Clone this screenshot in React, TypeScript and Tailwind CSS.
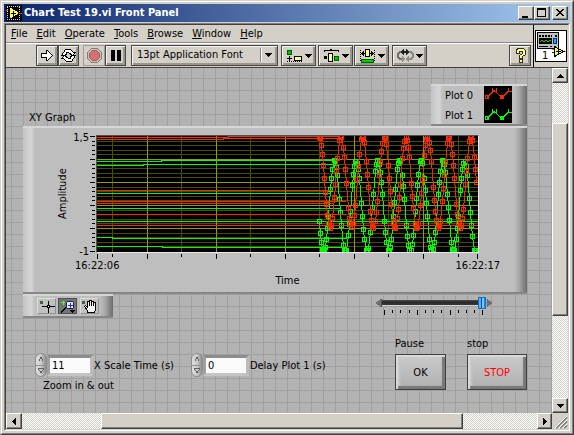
import React, { useState } from 'react';

const MAJOR_X = [50, 119, 188, 257, 326];
const MINOR_X = [15, 84, 153, 222, 291, 361];
const Y_STEPS = Array.from({ length: 26 }, (_, i) => Math.round(i * 4.6));

const RED = '#f62a00';
const GREEN = '#00ff00';

// Flat stretches of the traces: y (or y before / after a step at x) and where they end
const RED_LINES = [
  'M0 1.5H131V.5H242',
  'M0 3.5H126V2.5H242',
  'M0 54.5H236',
  'M0 65.5H249',
  'M0 67.5H236',
  'M0 78.5H250',
  'M0 89.5H381',
];
const GREEN_LINES = [
  'M0 25.5H64V24.5H237',
  'M0 29.5H46V28.5H237',
  'M0 57.5H233',
  'M0 72.5H243',
  'M0 85.5H381',
  'M0 101.5H15V102.5H250',
  'M0 110.5H65V111.5H246',
];

const STEPS = [1, 1, 2, 1, 1, 2, 1];

function wave(centre: number, trough: number) {
  const points: { x: number; y: number }[] = [];
  let x = 222;
  let i = 0;
  while (x <= 380) {
    const y = centre + 46 * Math.cos((2 * Math.PI * (x - trough)) / 21.67);
    points.push({ x, y: Math.min(114, Math.max(1, Math.round(y))) });
    x += i < 8 ? 1 : STEPS[i % STEPS.length];
    i++;
  }
  return points;
}

const PLOTS = [
  { color: GREEN, lines: GREEN_LINES, points: wave(70, 226.3) },
  { color: RED, lines: RED_LINES, points: wave(46, 232.7) },
];

const Plot = () => (
  <svg
    className="block h-[116px] w-full bg-black"
    viewBox="0 0 381 116"
    preserveAspectRatio="none"
    shapeRendering="crispEdges"
    fill="none"
  >
    {Y_STEPS.map((y, i) => (
      i % 5 !== 0 && <path key={y} d={`M0 ${y + 0.5}H381`} stroke="#4d4d00" />
    ))}
    {MINOR_X.map((x) => <path key={x} d={`M${x + 0.5} 0V116`} stroke="#4d4d00" />)}
    {[23, 46, 69, 92].map((y) => <path key={y} d={`M0 ${y + 0.5}H381`} stroke="#999900" />)}
    {MAJOR_X.map((x) => <path key={x} d={`M${x + 0.5} 0V116`} stroke="#999900" />)}
    {PLOTS.map(({ color, lines, points }) => (
      <g key={color} stroke={color}>
        <path d={lines.join('')} />
        <polyline points={points.map((p) => `${p.x + 0.5},${p.y + 0.5}`).join(' ')} />
        {points.map((p) => (
          <rect key={p.x} x={p.x - 1.5} y={p.y - 1.5} width="4" height="4" />
        ))}
      </g>
    ))}
  </svg>
);

const YTicks = () => (
  <svg className="block h-[118px] w-1.5 shrink-0" viewBox="0 0 6 118" shapeRendering="crispEdges" stroke="#000">
    {Y_STEPS.map((y, i) => (
      <path key={y} d={`M${i % 5 === 0 ? 0 : 2} ${y + 1.5}H5`} />
    ))}
  </svg>
);

const XTicks = () => (
  <svg
    className="mt-px block h-[5px] w-full"
    viewBox="0 0 383 5"
    preserveAspectRatio="none"
    shapeRendering="crispEdges"
    stroke="#000"
  >
    {[0, ...MAJOR_X, 380].map((x) => <path key={x} d={`M${x + 1.5} 0V5`} />)}
    {MINOR_X.map((x) => <path key={x} d={`M${x + 1.5} 0V3`} />)}
  </svg>
);

// Raised grey plate used behind the graph, the legend and the palette
const PLATE =
  'border-t-2 border-b-2 border-t-[#d6d6d6] border-b-[#868686] bg-[linear-gradient(90deg,#c4c4c4,#d6d6d6_8px,#bebebe_12px,#bebebe_calc(100%-13px),#a8a8a8_calc(100%-8px),#6c6c6c)]';

const RAISED =
  'bg-[#d4d0c8] border border-t-white border-l-white border-r-[#404040] border-b-[#404040] shadow-[inset_-1px_-1px_0_#808080]';

const TROUGH =
  'bg-[conic-gradient(#fff_25%,#d4d0c8_0_50%,#fff_0_75%,#d4d0c8_0)] bg-[length:2px_2px]';

const TOOL =
  'flex h-[21px] items-center justify-center border border-[#484848] bg-[#d4d0c8] shadow-[inset_1px_1px_0_#f4f2ee,inset_-2px_-2px_0_#9a968e]';

interface IconProps {
  w: number;
  h: number;
  children: React.ReactNode;
}

const Icon = ({ w, h, children }: IconProps) => (
  <svg width={w} height={h} viewBox={`0 0 ${w} ${h}`} shapeRendering="crispEdges" fill="none" className="shrink-0">
    {children}
  </svg>
);

const Down = () => (
  <Icon w={7} h={4}>
    <path d="M0 0h7v1H0zM1 1h5v1H1zM2 2h3v1H2zM3 3h1v1H3z" fill="#000" />
  </Icon>
);

const MenuItem = ({ text }: { text: string }) => (
  <button type="button" className="leading-4">
    <span className="underline underline-offset-1">{text[0]}</span>
    {text.slice(1)}
  </button>
);

const TitleBar = () => (
  <header className="flex h-[18px] items-center bg-[linear-gradient(90deg,#0a246a,#a6caf0)] pl-0.5 pr-0.5">
    <Icon w={16} h={16}>
      <path d="M0 0h16v16H0z" fill="#000" />
      <path d="M1 1.5h14M1 14.5h14" stroke="#d8d8d8" strokeDasharray="1 1" />
      <path d="M1.5 2v12M13.5 2v12" stroke="#d8d8d8" strokeDasharray="1 1" />
      <path d="M4 3v10L12 8z" fill="#ffff50" stroke="#ffff50" />
      <path d="M5 8.5h5M7.5 6v5" stroke="#000" />
      <path d="M0 5.5h2M13 8.5h3" stroke="#f33" />
      <path d="M0 11.5h2" stroke="#00f" />
    </Icon>
    <h1 className="ml-0.5 flex-1 font-bold leading-4 text-white">Chart Test 19.vi Front Panel</h1>
    <div className="flex">
      <button type="button" aria-label="Minimize" className={`${RAISED} h-3.5 w-4`}>
        <Icon w={14} h={12}>
          <path d="M3 9h6v2H3z" fill="#000" />
        </Icon>
      </button>
      <button type="button" aria-label="Maximize" className={`${RAISED} h-3.5 w-4`}>
        <Icon w={14} h={12}>
          <path d="M2 2h9M2 1.5h9M2.5 2v8M10.5 2v8M2 9.5h9" stroke="#000" />
        </Icon>
      </button>
      <button type="button" aria-label="Close" className={`${RAISED} ml-0.5 h-3.5 w-4`}>
        <Icon w={14} h={12}>
          <path
            d="M3 2h2v1H3zM9 2h2v1H9zM4 3h2v1H4zM8 3h2v1H8zM5 4h4v1H5zM6 5h2v1H6zM5 6h4v1H5zM4 7h2v1H4zM8 7h2v1H8zM3 8h2v1H3zM9 8h2v1H9z"
            fill="#000"
          />
        </Icon>
      </button>
    </div>
  </header>
);

const Toolbar = () => (
  <div className="flex h-[23px] pl-[30px] pr-0.5 pt-px">
    <button type="button" aria-label="Run" className={`${TOOL} w-[22px]`}>
      <Icon w={12} h={11}>
        <path d="M.5 3.5h5v-3h1l5 5-5 5h-1v-3h-5z" fill="#fff" stroke="#000" />
      </Icon>
    </button>
    <button type="button" aria-label="Run Continuously" className={`${TOOL} w-[21px]`}>
      <Icon w={15} h={13}>
        <g fill="#fff" stroke="#000">
          <path d="M.5 6.5L4.5 .5H9.5L12.5 3.5H14.5L11.5 6.5L7.5 3.5H6L4.5 6.5z" />
          <path d="M14.5 6.5L10.5 12.5H5.5L2.5 9.5H.5L3.5 6.5L7.5 9.5H9L10.5 6.5z" />
        </g>
      </Icon>
    </button>
    <button
      type="button"
      aria-label="Abort"
      className="ml-1 flex h-[21px] w-[22px] items-center justify-center border border-[#a09c94] bg-[#d4d0c8]"
    >
      <Icon w={15} h={15}>
        <path d="M4.5 .5h6l4 4v6l-4 4h-6l-4-4v-6z" fill="#c8c4bc" stroke="#807c78" />
        <path d="M5.5 2.5h4l3 3v4l-3 3h-4l-3-3v-4z" fill="#d87070" stroke="#a05c58" />
      </Icon>
    </button>
    <button type="button" aria-label="Pause execution" className={`${TOOL} w-[21px]`}>
      <Icon w={10} h={11}>
        <path d="M0 0h4v11H0zM6 0h4v11H6z" fill="#000" />
      </Icon>
    </button>
    <div className="relative ml-[5px] w-[147px]">
      <select
        aria-label="Text settings"
        className="h-[21px] w-full appearance-none border border-[#484848] bg-[#d4d0c8] pl-[5px] pb-0.5 leading-4 shadow-[inset_1px_1px_0_#f4f2ee,inset_-2px_-2px_0_#9a968e]"
      >
        <option>13pt Application Font</option>
      </select>
      <span className="pointer-events-none absolute right-[6px] top-[3px] flex h-[14px] items-center border-l border-[#808080] pl-[4px] shadow-[inset_1px_0_0_#fff]">
        <Down />
      </span>
    </div>
    <button type="button" aria-label="Align Objects" className={`${TOOL} ml-[3px] w-[35px] gap-0.5`}>
      <Icon w={17} h={12}>
        <path d="M1.5 .5h4v4h-4z" fill="#00c000" stroke="#006000" />
        <path d="M3.5 6v5M1 8.5h5" stroke="#000" />
        <path d="M8.5 6.5h7v4h-7z" fill="#ffff80" stroke="#000" />
        <path d="M1 11.5h16" stroke="#000" strokeDasharray="1 1" />
      </Icon>
      <Down />
    </button>
    <button type="button" aria-label="Distribute Objects" className={`${TOOL} ml-0.5 w-[35px] gap-0.5`}>
      <Icon w={17} h={13}>
        <path d="M1 2.5v-1h6v-1h1v1h7v1" stroke="#000" />
        <path d="M1 7h3v3H1z" fill="#000" />
        <path d="M5.5 4.5h4v8h-4z" fill="#ffff80" stroke="#000" />
        <path d="M11.5 7.5h4v4h-4z" fill="#00c000" stroke="#006000" />
      </Icon>
      <Down />
    </button>
    <button type="button" aria-label="Resize Objects" className={`${TOOL} ml-px w-[35px] gap-0.5`}>
      <Icon w={17} h={14}>
        <path d="M1.5 1v12M15.5 1v12" stroke="#000" strokeDasharray="1 1" />
        <path d="M2 4.5h4M11 4.5h4M4.5 2v5M12.5 2v5M3.5 3v3M13.5 3v3" stroke="#000" />
        <path d="M6.5 .5h4v7h-4z" fill="#ffff80" stroke="#000" />
        <path d="M2.5 10.5h12v3h-12z" fill="#00d000" stroke="#006000" />
      </Icon>
      <Down />
    </button>
    <button type="button" aria-label="Reorder" className={`${TOOL} ml-[3px] w-[35px] gap-0.5`}>
      <Icon w={17} h={13}>
        <path d="M6 3H3L1 5v3l2 2h3" stroke="#707070" strokeWidth="2" />
        <path d="M11 3h3l2 2v3l-2 2h-3" stroke="#888888" strokeWidth="2" />
        <path d="M5 7l4 3-4 3zM12 7v6l-4-3z" fill="#909090" />
        <path d="M3 3l4-3v2h2V0l4 3-4 3V4H7v2z" fill="#202020" />
      </Icon>
      <Down />
    </button>
    <button type="button" aria-label="Help" className={`${TOOL} ml-auto w-[22px]`}>
      <Icon w={11} h={15}>
        <path
          d="M2.5 .5h6l2 2v4l-3 2v2h-3v-3l3-2v-2h-3v2h-3v-3zM4.5 11.5h3v3h-3z"
          fill="#ffff90"
          stroke="#303020"
        />
      </Icon>
    </button>
  </div>
);

const ViIcon = () => (
  <div className="flex w-[35px] items-start border-l border-black pl-px pt-[5px]">
    <div className="relative">
      <Icon w={32} h={32}>
        <path d="M.5 .5h31v31H.5z" fill="#fff" stroke="#000" />
        <path d="M2.5 2.5h21v16h-21z" fill="#c0c0c0" stroke="#000" />
        <path d="M4 5.5h13M20 5.5h2" stroke="#000" strokeWidth="2" strokeDasharray="2 1" />
        <path d="M4 8h13v6H4z" fill="#000" />
        <path d="M5 12l2-2 2 2 2-2 2 2 2-2 1 1" stroke="#00e000" />
        <path d="M18.5 8.5h3v5h-3z" fill="#30a0ff" stroke="#003070" />
        <path d="M4 16.5h9M15 16.5h2" stroke="#000" />
        <path d="M17 22.5h3" stroke="#00f" />
        <path d="M17 19.5h3M28 21.5h3" stroke="#f55" />
        <path d="M19.5 16.5v10l9-5z" fill="#ffff20" stroke="#000" />
        <path d="M21 21.5h5M23.5 19v5" stroke="#000" />
      </Icon>
      <span className="absolute bottom-0 left-[7px] leading-3">1</span>
    </div>
  </div>
);

const Legend = () => (
  <div className={`flex h-[42px] w-24 justify-between pl-3.5 pr-[15px] ${PLATE}`}>
    <div className="flex flex-col leading-5">
      <span>Plot 0</span>
      <span>Plot 1</span>
    </div>
    <svg width="28" height="37" viewBox="0 0 28 37" shapeRendering="crispEdges" fill="none" className="bg-black">
      {[RED, GREEN].map((color, i) => (
        <g key={color} stroke={color} transform={`translate(0 ${i * 21})`}>
          <path d="M3 11.5L10 4.5L18 11.5L25 4.5" />
          <path d="M1.5 9.5h3v3h-3zM16.5 9.5h3v3h-3zM8.5 2v3h4v-3M24.5 2v3h3" />
        </g>
      ))}
    </svg>
  </div>
);

const Graph = () => (
  <figure className={`pb-[3px] pl-8 pr-12 pt-[7px] ${PLATE}`}>
    <div className="flex items-start">
      <span className="flex h-[118px] w-4 rotate-180 items-center justify-center leading-4 [writing-mode:vertical-rl]">
        Amplitude
      </span>
      <div className="-mb-[7px] -mt-[5px] flex h-[130px] w-[19px] flex-col items-end justify-between pr-px leading-4">
        <span>1,5</span>
        <span>-1</span>
      </div>
      <YTicks />
      <div className="min-w-0 flex-1">
        <div className="border border-b-[#e8e8e8] border-l-[#505050] border-r-[#e8e8e8] border-t-[#505050]">
          <Plot />
        </div>
        <XTicks />
        <div className="-mx-[21px] flex justify-between leading-[14px]">
          <span>16:22:06</span>
          <span>16:22:17</span>
        </div>
        <div className="text-center leading-4">Time</div>
      </div>
    </div>
  </figure>
);

const PALETTE_BUTTON =
  'flex h-4 w-[19px] items-center justify-center border border-t-[#dedede] border-l-[#dedede] border-r-[#909090] border-b-[#909090] bg-[#c0c0c0]';

const Palette = () => (
  <div className={`flex h-6 w-[90px] gap-0.5 pl-[14px] pt-0.5 ${PLATE}`}>
    <button type="button" aria-label="Cursor movement" className={PALETTE_BUTTON}>
      <Icon w={17} h={14}>
        <path d="M2 2h3v3H2z" fill="#406040" />
        <path d="M4 7.5h13M10.5 2v12" stroke="#000" />
        <path d="M9.5 6.5h2v2h-2z" fill="#fff" stroke="#000" />
      </Icon>
    </button>
    <button
      type="button"
      aria-label="Zoom"
      className="flex h-4 w-[19px] items-center justify-center border border-[#505050] bg-[#747474]"
    >
      <Icon w={17} h={14}>
        <path d="M2 3.5h4M4 1.5v4" stroke="#50ff20" />
        <path d="M2 13.5l5-5" stroke="#000" strokeWidth="2" />
        <circle cx="11" cy="6" r="4" fill="#e8e8ff" stroke="#202060" />
        <path d="M8.5 6h5M11 3.5v5" stroke="#3030a0" />
        <path d="M11 11h5v1h-5zM12 12h3v1h-3zM13 13h1v1h-1z" fill="#000" />
      </Icon>
    </button>
    <button type="button" aria-label="Pan" className={`${PALETTE_BUTTON} ml-px`}>
      <Icon w={17} h={14}>
        <path d="M1 2h3v3H1z" fill="#406040" />
        <path
          d="M6.5 13.5v-2l-3-4 1-1 2 2v-6h2v-1h2v1h2v1h2v7l-1 3z"
          fill="#f4f4f4"
          stroke="#000"
        />
        <path d="M8.5 3v4M10.5 2v5M12.5 3v4" stroke="#000" />
      </Icon>
    </button>
  </div>
);

const WindowSlider = () => (
  <div className="mr-[34px] mt-[3px] w-[118px]">
    <div className="flex items-center">
      <Icon w={7} h={8}>
        <path d="M0 4L6 0V8z" fill="#707070" />
        <path d="M6.5 0v8" stroke="#505050" />
      </Icon>
      <input
        type="range"
        aria-label="Time window"
        min={0}
        max={12}
        defaultValue={12}
        className="h-3 min-w-0 flex-1 appearance-none bg-[linear-gradient(#0000_3px,#505050_3px,#282828_5px,#383838_8px,#d0d0d0_8px,#d0d0d0_9px,#0000_9px)] [&::-webkit-slider-thumb]:h-3 [&::-webkit-slider-thumb]:w-2 [&::-webkit-slider-thumb]:appearance-none [&::-webkit-slider-thumb]:border [&::-webkit-slider-thumb]:border-[#1f6fc0] [&::-webkit-slider-thumb]:bg-[linear-gradient(90deg,#50b0ff_2px,#104a90_2px,#104a90_3px,#70c8ff_3px,#70c8ff_5px,#2880e0_5px)]"
      />
      <Icon w={7} h={8}>
        <path d="M7 4L1 0V8z" fill="#707070" />
        <path d="M.5 0v8" stroke="#a0a0a0" />
      </Icon>
    </div>
    <svg className="mt-px block h-[5px] w-full" viewBox="0 0 118 5" preserveAspectRatio="none" shapeRendering="crispEdges" stroke="#000">
      {Array.from({ length: 13 }, (_, i) => (
        <path key={i} d={`M${Math.round(i * 8.2) + 9.5} 0V${i % 4 === 0 ? 5 : 3}`} />
      ))}
    </svg>
  </div>
);

interface NumericProps {
  id: string;
  label: string;
  initial: number;
}

const Numeric = ({ id, label, initial }: NumericProps) => {
  const [value, setValue] = useState(initial);
  return (
    <div className="flex h-6 items-center">
      <div className="flex h-6 w-3 flex-col overflow-hidden rounded-full border border-[#8c8c8c] bg-[linear-gradient(90deg,#dedede,#cccccc_50%,#8c8c8c)]">
        <button
          type="button"
          aria-label={`Increase ${label}`}
          onClick={() => setValue(value + 1)}
          className="flex flex-1 items-center justify-center border-b border-[#909090]"
        >
          <Icon w={6} h={5}>
            <path d="M.5 4.5L3 .5L5.5 4.5" stroke="#606060" />
          </Icon>
        </button>
        <button
          type="button"
          aria-label={`Decrease ${label}`}
          onClick={() => setValue(value - 1)}
          className="flex flex-1 items-center justify-center"
        >
          <Icon w={6} h={5}>
            <path d="M0 .5h6L3 4.5z" fill="#cccccc" stroke="#606060" />
          </Icon>
        </button>
      </div>
      <input
        id={id}
        type="text"
        value={value}
        onChange={(e) => setValue(Number(e.target.value) || 0)}
        className="h-[21px] w-[46px] border-[3px] border-b-[#c4c4c4] border-l-[#a0a0a0] border-r-[#bcbcbc] border-t-[#8c8c8c] bg-[#fafafa] pl-0.5 leading-4"
      />
      <label htmlFor={id} className="pl-px pt-0.5 leading-4">{label}</label>
    </div>
  );
};

const PANEL_BUTTON =
  'mt-0.5 h-9 border border-[#404040] bg-[linear-gradient(#cacaca,#b0b0b0)] pt-0.5 shadow-[inset_2px_2px_1px_#dadada,inset_-3px_-3px_1px_#787878,inset_4px_4px_2px_#c8c8c8]';

const FrontPanel = () => (
  <main className="flex-1 bg-[#b3b3b3] bg-[linear-gradient(90deg,#a0a0a0_1px,transparent_1px),linear-gradient(#a0a0a0_1px,transparent_1px)] bg-[length:12px_12px] bg-[position:5px_10px] pl-[17px] pr-[25px] pt-4">
    <div className="flex items-end justify-between">
      <h2 className="pl-1.5 leading-4">XY Graph</h2>
      <Legend />
    </div>
    <Graph />
    <div className="flex items-start justify-between">
      <Palette />
      <WindowSlider />
    </div>
    <div className="mt-[18px] flex items-start justify-between">
      <div className="flex gap-[17px] pl-3 pt-[17px]">
        <div>
          <Numeric id="scale" label="X Scale Time (s)" initial={11} />
          <p className="pl-2 pt-px leading-4">Zoom in &amp; out</p>
        </div>
        <Numeric id="delay" label="Delay Plot 1 (s)" initial={0} />
      </div>
      <div className="flex gap-[21px]">
        <div className="flex flex-col">
          <label htmlFor="pause" className="leading-4">Pause</label>
          <button id="pause" type="button" className={`${PANEL_BUTTON} w-[51px]`}>OK</button>
        </div>
        <div className="flex flex-col">
          <label htmlFor="stop" className="leading-4">stop</label>
          <button id="stop" type="button" className={`${PANEL_BUTTON} w-[60px] text-[#ff0000]`}>STOP</button>
        </div>
      </div>
    </div>
  </main>
);

const SCROLL_BUTTON = `${RAISED} flex shrink-0 items-center justify-center`;

const VerticalScroll = () => (
  <div className="flex w-4 flex-col">
    <button type="button" aria-label="Scroll up" className={`${SCROLL_BUTTON} h-[15px]`}>
      <Icon w={7} h={4}>
        <path d="M3 0h1v1H3zM2 1h3v1H2zM1 2h5v1H1zM0 3h7v1H0z" fill="#000" />
      </Icon>
    </button>
    <div className={`flex-[40] ${TROUGH}`} />
    <div className={`flex-[192] ${RAISED}`} />
    <div className={`flex-[83] ${TROUGH}`} />
    <button type="button" aria-label="Scroll down" className={`${SCROLL_BUTTON} h-[15px]`}>
      <Down />
    </button>
  </div>
);

const HorizontalScroll = () => (
  <div className="flex h-4">
    <button type="button" aria-label="Scroll left" className={`${SCROLL_BUTTON} w-4`}>
      <Icon w={4} h={7}>
        <path d="M3 0h1v7H3zM2 1h1v5H2zM1 2h1v3H1zM0 3h1v1H0z" fill="#000" />
      </Icon>
    </button>
    <div className={`flex-[79] ${TROUGH}`} />
    <div className={`flex-[362] ${RAISED}`} />
    <div className={`flex-[74] ${TROUGH}`} />
    <button type="button" aria-label="Scroll right" className={`${SCROLL_BUTTON} w-[15px]`}>
      <Icon w={4} h={7}>
        <path d="M0 0h1v7H0zM1 1h1v5H1zM2 2h1v3H2zM3 3h1v1H3z" fill="#000" />
      </Icon>
    </button>
    <svg width="16" height="16" viewBox="0 0 16 16" className="shrink-0 bg-[#d4d0c8]">
      <path d="M4 15L15 4M8 15L15 8M12 15L15 12" stroke="#808080" strokeWidth="2" />
      <path d="M3 15L15 3M7 15L15 7M11 15L15 11" stroke="#fff" />
    </svg>
  </div>
);

const App = () => (
  <div className="flex min-h-screen flex-col border border-b-[#404040] border-l-[#d4d0c8] border-r-[#404040] border-t-[#d4d0c8] bg-[#d4d0c8] font-['DejaVu_Sans_Condensed','DejaVu_Sans',sans-serif] text-[11px] text-black">
    <div className="flex flex-1 flex-col border border-b-[#808080] border-l-white border-r-[#808080] border-t-white p-0.5">
      <TitleBar />
      <div className="mt-px flex flex-1 flex-col border border-b-white border-l-[#808080] border-r-white border-t-[#808080]">
        <div className="flex flex-1 flex-col border border-b-[#d4d0c8] border-l-[#404040] border-r-[#d4d0c8] border-t-[#404040]">
          <div className="flex border-b border-[#404040]">
            <div className="flex-1">
              <nav className="flex h-[18px] items-center gap-[9px] border-b border-[#8c8490] pl-[5px]">
                {['File', 'Edit', 'Operate', 'Tools', 'Browse', 'Window', 'Help'].map((text) => (
                  <MenuItem key={text} text={text} />
                ))}
              </nav>
              <div className="border-t border-white">
                <Toolbar />
              </div>
            </div>
            <ViIcon />
          </div>
          <div className="flex flex-1">
            <FrontPanel />
            <VerticalScroll />
          </div>
          <HorizontalScroll />
        </div>
      </div>
    </div>
  </div>
);

export default App;
